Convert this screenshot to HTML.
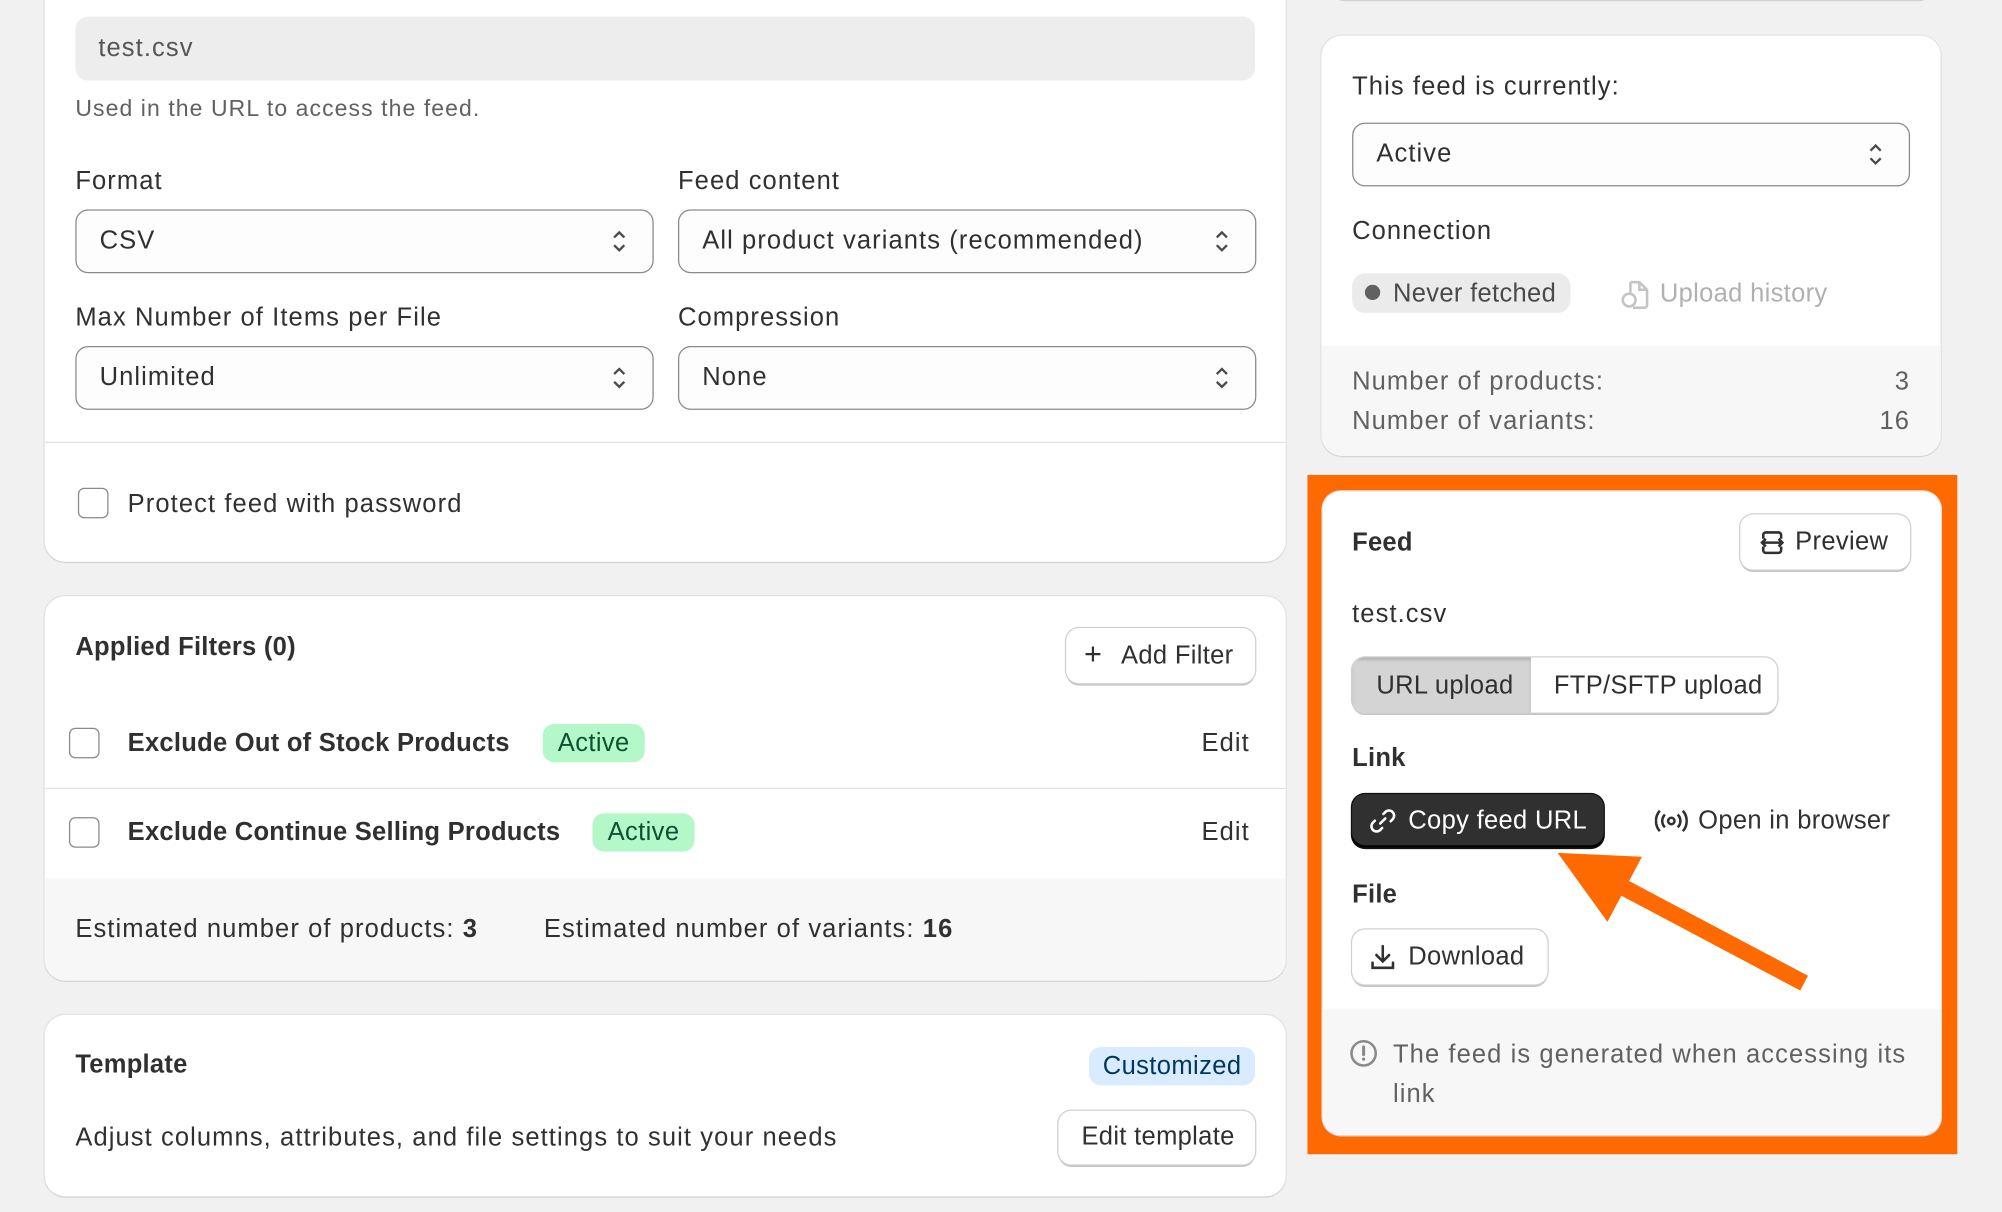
<!DOCTYPE html>
<html><head><meta charset="utf-8"><style>
html,body{margin:0;padding:0;width:2002px;height:1212px;overflow:hidden;background:#f1f1f1;}
#w{position:absolute;left:0;top:0;width:1568px;height:949px;transform:scale(1.27679);transform-origin:0 0;font-family:"Liberation Sans",sans-serif;color:#303030;font-size:20px;letter-spacing:0.85px;}
.a{position:absolute;}
.card{position:absolute;background:#fff;border-radius:16px;box-shadow:0 1px 0 #d4d4d4,0 0 0 1px #e3e3e3;overflow:hidden;}
.t{position:absolute;white-space:nowrap;line-height:24px;}
.b{font-weight:bold;letter-spacing:0.2px;}
.n{letter-spacing:0.25px;}
.sel{position:absolute;border:1px solid #8a8a8a;border-radius:10px;background:#fdfdfd;box-sizing:border-box;}
.sel span{position:absolute;left:18px;top:50%;transform:translateY(-50%);white-space:nowrap;}
.chev{position:absolute;right:20px;top:50%;margin-top:-10px;}
.btn{position:absolute;border-radius:10px;background:#fff;box-shadow:0 0 0 1px #d0d0d0,0 2px 0 #c4c4c4;box-sizing:border-box;}
.btn span{position:absolute;top:50%;transform:translateY(-50%);white-space:nowrap;}
.cb{position:absolute;width:22px;height:22px;border:1.5px solid #8a8a8a;border-radius:5px;background:#fff;}
.badge{position:absolute;border-radius:9px;text-align:center;line-height:30px;height:30px;letter-spacing:0.3px;}
.grey{position:absolute;background:#f7f7f7;left:0;right:0;}
</style></head><body><div id="w">
<div class="card" style="left:35px;top:-20px;width:972px;height:460px;">
 <div class="a" style="left:24px;top:33px;width:924px;height:50px;background:#ededed;border-radius:10px;"></div>
 <div class="t" style="left:42px;top:46px;color:#555">test.csv</div>
 <div class="t" style="left:24px;top:93px;font-size:18px;color:#616161">Used in the URL to access the feed.</div>
 <div class="t" style="left:24px;top:150px">Format</div>
 <div class="t" style="left:496px;top:150px">Feed content</div>
 <div class="sel" style="left:24px;top:184px;width:453px;height:50px"><span>CSV</span><svg class="chev" width="12" height="20" viewBox="0 0 12 20"><path d="M2 7l4-4 4 4M2 13l4 4 4-4" fill="none" stroke="#4a4a4a" stroke-width="1.8"/></svg></div>
 <div class="sel" style="left:496px;top:184px;width:453px;height:50px"><span>All product variants (recommended)</span><svg class="chev" width="12" height="20" viewBox="0 0 12 20"><path d="M2 7l4-4 4 4M2 13l4 4 4-4" fill="none" stroke="#4a4a4a" stroke-width="1.8"/></svg></div>
 <div class="t" style="left:24px;top:257px">Max Number of Items per File</div>
 <div class="t" style="left:496px;top:257px">Compression</div>
 <div class="sel" style="left:24px;top:291px;width:453px;height:50px"><span>Unlimited</span><svg class="chev" width="12" height="20" viewBox="0 0 12 20"><path d="M2 7l4-4 4 4M2 13l4 4 4-4" fill="none" stroke="#4a4a4a" stroke-width="1.8"/></svg></div>
 <div class="sel" style="left:496px;top:291px;width:453px;height:50px"><span>None</span><svg class="chev" width="12" height="20" viewBox="0 0 12 20"><path d="M2 7l4-4 4 4M2 13l4 4 4-4" fill="none" stroke="#4a4a4a" stroke-width="1.8"/></svg></div>
 <div class="a" style="left:0;right:0;top:366px;height:1px;background:#e3e3e3"></div>
 <div class="cb" style="left:26px;top:402px"></div>
 <div class="t" style="left:65px;top:403px">Protect feed with password</div>
</div>
<div class="card" style="left:35px;top:467px;width:972px;height:301px;">
 <div class="t b" style="left:24px;top:28px">Applied Filters (0)</div>
 <div class="btn n" style="left:800px;top:25px;width:148px;height:43px"><span style="left:14px;font-size:24px;top:48%">+</span><span style="left:43px">Add Filter</span></div>
 <div class="cb" style="left:19px;top:103px"></div>
 <div class="t b" style="left:65px;top:103px">Exclude Out of Stock Products</div>
 <div class="badge" style="left:390px;top:100px;width:80px;background:#b4f7c9;color:#0c5132">Active</div>
 <div class="t" style="left:906px;top:103px">Edit</div>
 <div class="a" style="left:0;right:0;top:150px;height:1px;background:#e3e3e3"></div>
 <div class="cb" style="left:19px;top:173px"></div>
 <div class="t b" style="left:65px;top:173px">Exclude Continue Selling Products</div>
 <div class="badge" style="left:429px;top:170px;width:80px;background:#b4f7c9;color:#0c5132">Active</div>
 <div class="t" style="left:906px;top:173px">Edit</div>
 <div class="grey" style="top:221px;bottom:0"></div>
 <div class="t" style="left:24px;top:249px">Estimated number of products: <b>3</b></div>
 <div class="t" style="left:391px;top:249px">Estimated number of variants: <b>16</b></div>
</div>
<div class="card" style="left:35px;top:795px;width:972px;height:142px;">
 <div class="t b" style="left:24px;top:27px">Template</div>
 <div class="badge" style="left:818px;top:25px;width:130px;background:#d9ecff;color:#00365e">Customized</div>
 <div class="t" style="left:24px;top:84px">Adjust columns, attributes, and file settings to suit your needs</div>
 <div class="btn n" style="left:794px;top:75px;width:154px;height:42px"><span style="left:18px">Edit template</span></div>
</div>
<div class="card" style="left:1043px;top:-20px;width:470px;height:20px;"></div>
<div class="card" style="left:1035px;top:28px;width:485px;height:329px;">
 <div class="t" style="left:24px;top:28px">This feed is currently:</div>
 <div class="sel" style="left:24px;top:68px;width:437px;height:50px"><span>Active</span><svg class="chev" width="12" height="20" viewBox="0 0 12 20"><path d="M2 7l4-4 4 4M2 13l4 4 4-4" fill="none" stroke="#4a4a4a" stroke-width="1.8"/></svg></div>
 <div class="t" style="left:24px;top:141px">Connection</div>
 <div class="a" style="left:24px;top:186px;width:171px;height:31px;border-radius:10px;background:#ebebeb"></div>
 <div class="a" style="left:34px;top:195px;width:12px;height:12px;border-radius:50%;background:#616161"></div>
 <div class="t n" style="left:56px;top:190px;color:#4a4a4a">Never fetched</div>
 <svg class="a" style="left:234px;top:189px" width="24" height="26" viewBox="0 0 24 26"><path d="M8 4h7l6 6v12a2 2 0 0 1-2 2H10M8 4v8M15 4v6h6" fill="none" stroke="#c4c4c4" stroke-width="2"/><circle cx="7" cy="18" r="5" fill="none" stroke="#c4c4c4" stroke-width="2"/></svg>
 <div class="t n" style="left:265px;top:190px;color:#b0b0b0">Upload history</div>
 <div class="grey" style="top:243px;bottom:0"></div>
 <div class="t" style="left:24px;top:259px;color:#616161">Number of products:</div>
 <div class="t" style="right:24px;top:259px;color:#616161">3</div>
 <div class="t" style="left:24px;top:290px;color:#616161">Number of variants:</div>
 <div class="t" style="right:24px;top:290px;color:#616161">16</div>
</div>
<div class="a" style="left:1024px;top:372px;width:509px;height:532px;background:#ff6a00"></div>
<div class="card" style="left:1036px;top:385px;width:484px;height:504px;border-radius:14px;">
 <div class="t b" style="left:23px;top:28px">Feed</div>
 <div class="btn n" style="left:327px;top:18px;width:133px;height:43px"><svg class="a" style="left:14px;top:11px" width="22" height="22" viewBox="0 0 22 22"><path d="M4 8V5a2 2 0 0 1 2-2h10a2 2 0 0 1 2 2v3M4 14v3a2 2 0 0 0 2 2h10a2 2 0 0 0 2-2v-3M3 11h16M6 8l-3 3 3 3M16 8l3 3-3 3" fill="none" stroke="#303030" stroke-width="2"/></svg><span style="left:43px">Preview</span></div>
 <div class="t" style="left:23px;top:84px">test.csv</div>
 <div class="a n" style="left:23px;top:130px;width:333px;height:43px;border-radius:10px;box-shadow:0 0 0 1px #d0d0d0,0 2px 0 #c4c4c4;background:#fff;overflow:hidden">
  <div class="a" style="left:0;top:0;width:140px;height:43px;background:#d4d4d4;box-shadow:inset 0 2px 2px #b5b5b5"></div>
  <div class="t" style="left:19px;top:10px">URL upload</div>
  <div class="t" style="left:158px;top:10px">FTP/SFTP upload</div>
 </div>
 <div class="t b" style="left:23px;top:197px">Link</div>
 <div class="a" style="left:23px;top:237px;width:197px;height:42px;border-radius:10px;background:#303030;box-shadow:0 0 0 1px #111,inset 0 -2px 0 #000"></div>
 <svg class="a" style="left:36px;top:247px" width="22" height="22" viewBox="0 0 22 22"><path d="M9 13l4-4M11.5 5.5l1.5-1.5a4 4 0 0 1 5.7 5.7l-1.5 1.5M10.5 16.5L9 18a4 4 0 0 1-5.7-5.7l1.5-1.5" fill="none" stroke="#fff" stroke-width="2" stroke-linecap="round"/></svg>
 <div class="t n" style="left:67px;top:246px;color:#fff">Copy feed URL</div>
 <svg class="a" style="left:260px;top:249px" width="26" height="18" viewBox="0 0 26 18"><circle cx="13" cy="9" r="2.5" fill="none" stroke="#303030" stroke-width="2"/><path d="M8 4a7 7 0 0 0 0 10M18 4a7 7 0 0 1 0 10M4 1a12 12 0 0 0 0 16M22 1a12 12 0 0 1 0 16" fill="none" stroke="#303030" stroke-width="2"/></svg>
 <div class="t n" style="left:294px;top:246px">Open in browser</div>
 <div class="t b" style="left:23px;top:304px">File</div>
 <div class="btn n" style="left:23px;top:343px;width:153px;height:43px"><svg class="a" style="left:13px;top:11px" width="22" height="22" viewBox="0 0 22 22"><path d="M11 2v12M6 9l5 5 5-5M3 15v4h16v-4" fill="none" stroke="#303030" stroke-width="2" stroke-linecap="round"/></svg><span style="left:44px">Download</span></div>
 <div class="grey" style="top:405px;bottom:0"></div>
 <svg class="a" style="left:21px;top:429px" width="22" height="22" viewBox="0 0 22 22"><circle cx="11" cy="11" r="9.5" fill="none" stroke="#8a8a8a" stroke-width="2"/><path d="M11 6v6" stroke="#8a8a8a" stroke-width="2.4" stroke-linecap="round"/><circle cx="11" cy="15.5" r="1.3" fill="#8a8a8a"/></svg>
 <div class="t" style="left:55px;top:426px;color:#616161;line-height:31px;white-space:normal;width:410px">The feed is generated when accessing its link</div>
</div>
<svg class="a" style="left:0;top:0" width="1568" height="949"><path d="M1413 770L1262 690" stroke="#ff6a00" stroke-width="13"/><polygon points="1220,668 1286,671 1259,722" fill="#ff6a00"/></svg>
</div></body></html>
